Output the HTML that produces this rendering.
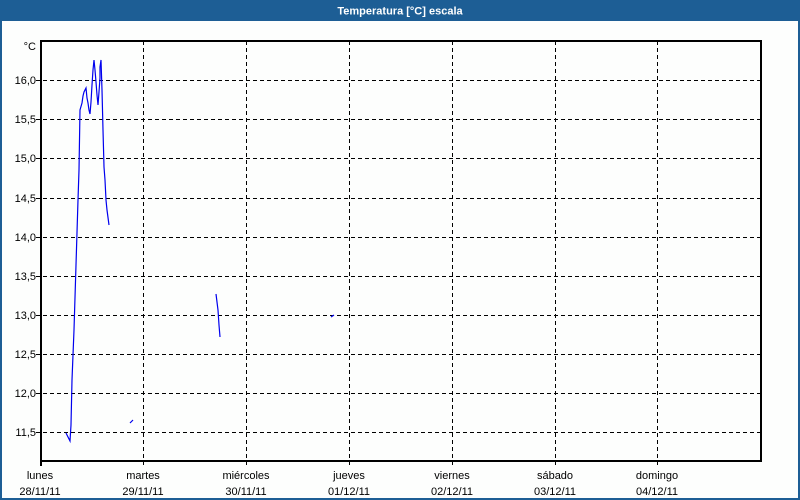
<!DOCTYPE html>
<html><head><meta charset="utf-8"><style>
html,body{margin:0;padding:0;width:800px;height:500px;overflow:hidden;background:#fdfefd;}
svg{display:block}
text{font-family:"Liberation Sans",sans-serif;font-size:11px;fill:#000}
</style></head><body>
<svg width="800" height="500" viewBox="0 0 800 500">
<rect x="0" y="0" width="800" height="500" fill="#1d5e95"/>
<rect x="2" y="21" width="796" height="477" fill="#fdfefd"/>
<text x="400" y="14.5" text-anchor="middle" style="font-weight:bold;fill:#fff;font-size:11px">Temperatura [°C] escala</text>
<g stroke="#000" stroke-width="1" stroke-dasharray="4,3" shape-rendering="crispEdges">
<line x1="143.5" y1="41" x2="143.5" y2="466"/>
<line x1="246.5" y1="41" x2="246.5" y2="466"/>
<line x1="349.5" y1="41" x2="349.5" y2="466"/>
<line x1="452.5" y1="41" x2="452.5" y2="466"/>
<line x1="555.5" y1="41" x2="555.5" y2="466"/>
<line x1="657.5" y1="41" x2="657.5" y2="466"/>
<line x1="36" y1="80.5" x2="760" y2="80.5"/>
<line x1="36" y1="119.5" x2="760" y2="119.5"/>
<line x1="36" y1="158.5" x2="760" y2="158.5"/>
<line x1="36" y1="198.5" x2="760" y2="198.5"/>
<line x1="36" y1="237.5" x2="760" y2="237.5"/>
<line x1="36" y1="276.5" x2="760" y2="276.5"/>
<line x1="36" y1="315.5" x2="760" y2="315.5"/>
<line x1="36" y1="354.5" x2="760" y2="354.5"/>
<line x1="36" y1="393.5" x2="760" y2="393.5"/>
<line x1="36" y1="432.5" x2="760" y2="432.5"/>
</g>
<path d="M41 41 H761 V461 H41 Z" fill="none" stroke="#000" stroke-width="2" shape-rendering="crispEdges"/>
<line x1="41" y1="460" x2="41" y2="466" stroke="#000" stroke-width="2"/>
<g text-anchor="end">
<text x="36" y="50">°C</text>
<text x="36" y="84">16,0</text>
<text x="36" y="123">15,5</text>
<text x="36" y="162">15,0</text>
<text x="36" y="202">14,5</text>
<text x="36" y="241">14,0</text>
<text x="36" y="280">13,5</text>
<text x="36" y="319">13,0</text>
<text x="36" y="358">12,5</text>
<text x="36" y="397">12,0</text>
<text x="36" y="436">11,5</text>
</g>
<g text-anchor="middle">
<text x="40" y="479">lunes</text><text x="40" y="495">28/11/11</text>
<text x="143" y="479">martes</text><text x="143" y="495">29/11/11</text>
<text x="246" y="479">miércoles</text><text x="246" y="495">30/11/11</text>
<text x="349" y="479">jueves</text><text x="349" y="495">01/12/11</text>
<text x="452" y="479">viernes</text><text x="452" y="495">02/12/11</text>
<text x="555" y="479">sábado</text><text x="555" y="495">03/12/11</text>
<text x="657" y="479">domingo</text><text x="657" y="495">04/12/11</text>
</g>
<g fill="none" stroke="#0000ee" stroke-width="1.2">
<polyline points="66,433 70,441 71,425 72,380 74,330 76,265 78,200 79,170 80,110 82,103 83,96 84,92 86,88 87,98 88,103 89,110 90,114 91,102 92,85 93,70 94,60 95,70 96,82 97,95 98,105 99,92 100,78 100,67 101,60 102,90 103,130 104,167 105,180 106,200 107,210 109,225"/>
<polyline points="216,294 218,310 219,325 220,337"/>
<polyline points="130,423 133,420"/>
<polyline points="331,317 334,315"/>
</g>
</svg>
</body></html>
